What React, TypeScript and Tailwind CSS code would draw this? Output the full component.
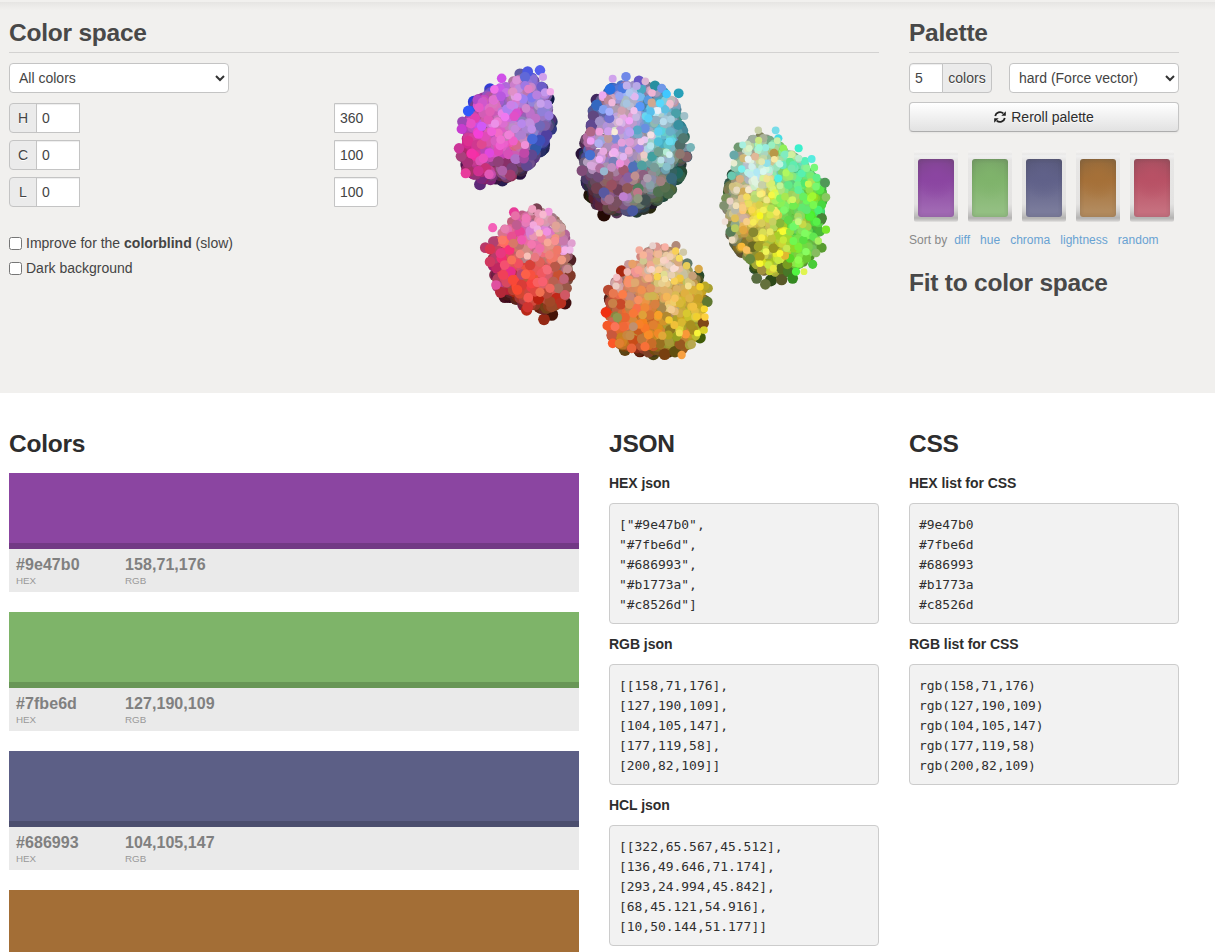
import React from "react";

type Swatch = { hex: string; rgb: string; shown: string; edge: string; deep: string; mid: string; light: string };

const SWATCHES: Swatch[] = [
  { hex: "#9e47b0", rgb: "158,71,176", shown: "#8b45a1", edge: "#723985", deep: "#7b4589", mid: "#8b45a1", light: "#a068b3" },
  { hex: "#7fbe6d", rgb: "127,190,109", shown: "#7eb469", edge: "#689656", deep: "#759e66", mid: "#7fb36b", light: "#93bf82" },
  { hex: "#686993", rgb: "104,105,147", shown: "#5c5f86", edge: "#4b4e6e", deep: "#575878", mid: "#606189", light: "#7a7b9b" },
  { hex: "#b1773a", rgb: "177,119,58", shown: "#a36e36", edge: "#875a2b", deep: "#8c673d", mid: "#a57038", light: "#b28a5d" },
  { hex: "#c8526d", rgb: "200,82,109", shown: "#b55062", edge: "#954151", deep: "#9c4f5e", mid: "#b85165", light: "#c66f7e" },
];

const JSON_BLOCKS = [
  { title: "HEX json", body: `["#9e47b0",\n"#7fbe6d",\n"#686993",\n"#b1773a",\n"#c8526d"]` },
  { title: "RGB json", body: `[[158,71,176],\n[127,190,109],\n[104,105,147],\n[177,119,58],\n[200,82,109]]` },
  { title: "HCL json", body: `[[322,65.567,45.512],\n[136,49.646,71.174],\n[293,24.994,45.842],\n[68,45.121,54.916],\n[10,50.144,51.177]]` },
];

const CSS_BLOCKS = [
  { title: "HEX list for CSS", body: "#9e47b0\n#7fbe6d\n#686993\n#b1773a\n#c8526d" },
  { title: "RGB list for CSS", body: "rgb(158,71,176)\nrgb(127,190,109)\nrgb(104,105,147)\nrgb(177,119,58)\nrgb(200,82,109)" },
];

/* Each cluster: an origin, a hull, and anchor samples "x y rrggbb" in thirds of a pixel. */
type Cluster = { ox: number; oy: number; n: number; hull: string; samples: string };

const CLUSTERS: Cluster[] = [
  {
    ox: 445, oy: 55, n: 750,
    hull: "225 55 262 60 285 85 305 110 312 150 318 200 304 250 285 300 250 330 210 360 160 375 110 372 65 345 60 300 65 240 68 180 95 130 135 108 190 90",
    samples:
      "310 132 202a60,320 200 303470,318 222 303880,295 280 28245a,225 355 2c1240,172 375 281c50,65 330 50144c,150 368 481038,285 46 555fee,248 50 4c58e0,240 66 6068d8,135 102 343cd4,86 140 2c3cd8,70 168 3058fa,98 135 b048c8,52 200 9c48b4,50 222 c83cd0,42 280 cc3498,48 304 a8407c,105 388 5c2878,62 355 e83c9c,290 95 6c5cc8,240 92 a078e4,300 112 c498ec,294 66 d0a0ec,170 70 d050e8,214 76 dc94d8,148 103 f070e8,250 102 e080c8,316 110 f4acec,205 110 e090c8,218 126 e898ec,144 134 e070d0,168 124 b858e0,112 142 d058cc,102 158 e858c8,135 170 e060b8,185 162 b080f0,197 150 cc80e8,235 132 a080f0,260 128 8078ec,243 160 d088d0,275 120 b880e0,287 146 c8a0ec,308 148 b490e8,312 182 9c80e0,290 170 9080d8,180 186 f078f0,150 206 ec90e8,110 214 d058f8,78 206 e850c8,90 190 e040b0,130 194 e058b8,208 184 e050c8,215 175 d850d0,230 206 b888ec,255 204 c090e0,272 190 c070c8,300 212 8060a8,285 212 7068b8,210 222 c888dc,190 240 f080d8,167 254 f070d0,140 230 f060d8,100 237 f440d8,120 245 e04cb8,70 258 dc3090,95 270 d03890,110 268 e04890,165 272 f060d0,205 258 f060c8,215 270 d86890,240 270 f090d8,230 240 b080d0,260 222 c090e8,262 252 4868d8,284 256 3c50b8,272 280 3058a8,305 240 5040a0,80 296 f430a8,115 310 ec50c0,133 294 e048e0,160 288 e048b8,190 298 d850b8,210 312 b070c8,238 294 c048a8,236 310 a048a0,260 300 604890,245 332 604890,185 325 883068,160 320 904078,68 322 a83078,100 348 d03090,122 340 c83078,132 358 e058b8,172 347 b060a8,200 340 784078,196 360 a03c70,155 335 8c2058",
  },
  {
    ox: 570, oy: 60, n: 1000,
    hull: "115 85 168 72 230 78 285 95 315 120 328 170 342 220 352 260 345 310 330 350 305 390 265 420 220 450 160 455 100 448 65 410 48 360 42 310 45 250 60 190 75 130",
    samples:
      "80 120 402860,36 282 281438,60 405 201008,102 464 240a04,200 455 243c34,240 442 282810,280 408 28483c,315 345 285850,318 320 284840,52 370 382850,45 250 503858,350 290 385870,295 400 486848,340 235 507870,80 432 503048,140 458 583858,188 452 4858a0,85 418 602838,225 420 405050,265 395 507050,285 382 587050,70 168 604880,65 195 604890,36 332 804c78,62 215 b06888,80 135 3468c0,120 88 2870e0,168 50 7088e8,207 62 6858c8,128 56 d0a4ec,226 64 dcb4d4,255 77 2890a0,326 100 28a0b8,275 85 7098e8,158 85 4878e0,170 77 c0b0ec,200 78 b8a8e8,214 88 48a8c0,246 99 f0b4d4,290 102 40c8ff,98 105 ecaaf0,148 108 98a4f0,126 128 f0b8dc,115 120 c08898,270 130 58d8fc,235 120 5898e0,208 110 78b8f0,178 98 b0c8f0,195 110 e0b8f0,245 128 d0a890,300 130 f0c0d0,100 148 80a0f0,118 155 a8b0fc,88 184 a090c8,155 152 d0a0b0,170 130 a8c4e0,210 140 5898f8,242 155 58c0ec,264 152 e8f0f8,285 148 60c0e0,318 160 48a0a8,343 168 a0c0c8,303 178 a8d0e0,148 185 e8c0e8,178 182 f4a4f8,192 152 f0c0ec,118 175 7070d0,235 175 58d0f8,258 180 90b0c0,280 185 b8dcec,325 195 3890a0,88 215 f0a0dc,115 214 d0a0ec,134 216 f8ecd8,62 243 f0a0f4,150 211 c090d8,180 218 c0a0f0,202 210 58a8c8,225 205 6890e0,243 225 f4e0e4,265 215 60d0f0,300 215 68b0c8,213 245 f0c8ec,180 246 dc9cd8,155 248 e4a0dc,115 236 c09898,135 235 8088d8,85 250 b0b0f0,100 274 e8a8e0,60 285 4870d0,88 298 f0b0f8,62 316 d8a8dc,133 275 f0b0f0,160 265 9090d8,176 272 e8a8d8,208 265 a088e0,222 285 ecccc8,242 257 b8e4ec,298 244 68dcf0,265 245 50c0d8,265 275 70a090,298 284 d0f0f0,273 300 b8e0e8,362 262 78b4b8,330 282 907870,330 255 506c68,350 290 886468,246 290 40a0a0,290 320 88c0cc,253 322 789c98,215 316 50a0a0,190 320 5070b8,160 290 e0b4f0,150 310 f090dc,125 322 c090c0,102 334 98b8d0,90 325 b070a0,85 350 704c78,115 345 906070,130 305 7880b8,175 352 8860a0,195 348 c09090,220 345 8c6080,232 355 b0a0b0,240 375 88a0a8,272 364 a08080,305 355 386878,205 385 508060,172 385 905858,203 397 bc7888,160 410 c080d0,118 418 a07090,102 398 5858a0,80 385 704050,145 390 704058,204 416 909880,160 330 a05870,140 425 785060,125 375 985060",
  },
  {
    ox: 710, oy: 115, n: 1300,
    hull: "120 75 150 62 195 80 220 100 255 115 285 150 305 180 335 205 342 240 335 285 332 325 318 360 320 400 295 430 265 455 230 475 185 475 140 460 110 425 80 400 62 360 60 310 48 270 55 210 75 160 85 115",
    samples:
      "68 180 284c3c,60 205 305444,65 238 285038,345 203 509858,335 310 488438,95 405 385030,82 385 404828,140 490 586c40,183 496 2c4818,166 508 64703c,215 494 585828,248 490 348820,135 460 305030,235 470 487828,120 432 68883c,335 398 589c30,62 350 587c58,42 272 809070,48 250 789058,85 97 709870,72 120 68a8a8,130 72 a0b0a0,145 46 c8d0a8,197 46 78dce8,205 70 48dce4,160 70 a8b098,146 76 c8e880,202 77 c8f0a8,185 90 98f0c0,98 90 a8f0e0,118 100 d8f4c8,167 98 98ece0,148 98 a0f8d8,192 115 b89848,220 100 90f058,266 100 3cf0cc,193 133 f8e8a0,225 118 80ecc0,245 118 d0f0a0,240 140 60e890,285 138 58f0b8,305 132 58ece0,313 158 78f878,266 130 b0ecc8,100 130 d0b878,114 132 e8f4f0,72 145 e8ecd0,74 157 90c8b0,135 125 e0b898,155 140 e0e8b0,170 145 90e0e8,210 148 c0f4e0,218 150 68e8c0,250 150 60ecb0,290 160 88f490,95 162 78f0ec,125 155 d0f0ec,140 172 b0e8f4,120 178 c0ecf0,160 170 d8f8f0,65 182 68c8b0,90 192 d8b080,228 174 b0f860,205 190 50f0e0,245 160 78e8b0,275 175 58f0b0,135 202 e0f4e0,170 192 f0e490,185 205 d8f070,155 210 c8d0a8,68 215 d0c080,80 225 e8dcc0,115 225 f4e8c8,100 230 d0ac58,210 212 c0f498,235 210 60e888,285 205 50e870,320 188 60f088,318 215 78f870,348 247 88c860,295 207 c8f850,330 225 58e848,60 258 e8d0c4,95 250 e0c488,110 245 f4dc60,135 250 b8d870,150 238 f8f080,185 240 f4f848,170 255 f0e888,210 250 80f060,248 254 d0f860,225 245 a8e850,280 245 68f060,308 243 a0f830,265 225 60f098,45 320 f0e0d8,75 285 b8b8a8,78 272 f0e0b8,98 278 f8cc80,125 285 f8d850,148 270 d8d048,150 302 f8f820,183 280 b0e050,200 292 f8e860,180 300 d8e848,160 285 f0f058,222 285 80f868,250 272 70ec50,310 270 78f850,335 270 48d840,325 285 48f070,290 285 60e870,75 310 e0c058,100 310 d0b0a0,110 320 f8d088,130 322 f8ec58,75 328 90a888,155 325 d8cc58,188 320 c8d060,210 325 88b838,235 315 60d848,265 320 c8f880,278 328 c8d848,300 305 50f038,250 335 70f868,320 320 58f048,348 344 78e82c,330 350 48b838,66 375 ecdcc0,75 340 b8cc60,100 345 e0a840,130 352 888830,155 368 f8f048,185 370 c0c438,180 350 e8e860,218 350 f8fc30,205 362 a8d028,220 375 c8e838,240 350 90e440,285 355 80fc60,310 365 60e850,325 378 a8f060,250 378 70f850,280 375 58e040,95 395 f8b838,110 405 f8c060,128 395 686824,145 395 a0a028,168 410 f0f458,190 400 989420,210 415 f8f830,230 400 c8e850,250 400 90d828,288 410 88fc60,265 395 78f038,318 414 88bc60,150 446 f8f830,150 425 a89820,175 450 c8e840,205 436 c8e840,225 422 e0b830,240 430 58d828,265 435 90fc50,308 448 48cc38,282 470 e0f450,258 470 50f440,232 448 789c20,215 460 586c20,155 465 a09040,190 460 e8e840,290 430 68c830",
  },
  {
    ox: 470, oy: 195, n: 600,
    hull: "150 60 190 45 235 55 268 85 285 115 298 155 292 200 296 245 285 300 262 330 225 345 180 335 145 318 110 300 82 275 75 235 65 190 75 140 95 105 125 80",
    samples:
      "200 42 784050,300 195 502024,285 324 401010,105 305 481020,128 300 501018,245 358 441408,300 242 803828,75 240 802848,70 140 b04070,160 330 802040,210 335 602818,170 345 b82818,222 373 942814,245 335 984828,272 324 b83020,92 292 b42838,46 158 b83868,60 162 d83450,60 200 d03860,68 98 f460b8,78 270 e050a0,132 52 e83c98,136 62 e870a8,105 102 e880b0,140 90 c05c90,187 42 f0a0c0,168 70 f078b8,205 55 e898b8,219 58 f8b8d0,236 50 f098dc,210 80 f898b8,245 75 d890a8,190 90 f4a8dc,180 107 d880d0,202 102 f0b0e4,208 114 f8c0b8,231 110 f090e0,258 92 e0a498,275 98 d0a0a0,150 110 e84498,125 125 e85090,97 135 fc7868,130 145 d87868,148 150 c07070,155 135 f058b0,185 148 f478b0,210 160 f070a8,215 130 f08098,233 142 f8a898,255 138 f89090,280 138 c878ac,305 145 e0a0d0,285 165 f8b0e8,262 165 f07868,300 165 f0b8e8,92 175 e83880,75 190 b83c68,95 190 f02c70,118 165 f83078,150 177 f08880,172 183 f8c0b8,195 187 e87880,125 195 f87058,210 202 e06058,238 180 f08078,250 188 f07868,275 195 f09880,293 222 c88c90,104 210 f45070,122 230 e82c88,80 215 c02860,145 205 f05060,155 238 b84870,167 238 fc6048,182 240 f85040,180 210 d84038,215 235 f05860,232 225 f46c78,255 215 b85848,265 240 c85030,282 252 c06478,100 240 f04058,110 262 d84860,128 255 f84838,142 285 f84830,155 270 d83c38,185 265 f84440,218 260 f86070,202 262 f86060,240 280 f06860,265 280 a87060,290 280 985848,285 300 d05864,175 308 f85850,210 292 f07050,230 295 b84838,195 290 e04840,250 260 b86050,173 336 d03430,240 320 a04828,205 310 b82010,260 310 c02818",
  },
  {
    ox: 590, oy: 235, n: 800,
    hull: "155 60 195 40 245 42 275 65 292 95 315 115 335 150 345 200 335 245 325 290 305 330 260 350 210 355 150 348 95 340 65 310 62 270 55 225 60 185 72 145 100 110 135 85",
    samples:
      "325 122 284828,292 85 607868,60 190 602018,105 345 604010,150 348 601808,190 358 504410,224 358 784010,255 350 605010,330 308 405c08,352 200 607830,340 265 804818,250 320 405008,95 108 a82810,55 165 b84830,62 205 b84c38,48 232 f03010,52 272 f45828,65 300 c8583c,68 325 fc5828,90 325 d87828,125 340 e86438,165 335 f87038,275 360 f8a040,298 330 a8a038,305 328 b8a850,270 328 985820,237 320 a89838,148 45 f4ac9c,188 32 e8d0cc,200 35 dc9890,225 36 f8b0a4,258 32 b08878,257 48 f8d058,280 52 d0c8a8,160 60 f8b498,175 65 e0a0a0,205 58 f0b898,240 65 f0d0b0,268 70 f8dc60,220 76 f8d4c4,200 78 e0c080,115 88 c89898,127 87 e8a068,160 78 d0c890,182 90 f0a890,185 103 f8d4cc,290 92 e8cc58,265 82 d8a880,250 102 f8dcd4,326 102 d8a848,308 122 c8a078,282 120 c8c0a0,80 127 f4c0c4,112 110 f0b8b0,78 153 ecccc4,85 135 d89090,145 105 f8a090,115 145 f8906c,135 143 e0a870,175 130 f8b088,202 125 f8d450,225 132 f4e0a0,215 145 e8d090,245 120 e8d0b0,253 138 f8d058,270 130 f0c840,295 153 f4e090,330 155 f4d028,345 153 b8a828,355 160 a8a030,310 165 d8b038,70 175 e87850,98 178 fc7c48,120 185 c88878,155 165 f09050,182 160 e09060,188 183 d0b450,145 195 f89060,222 165 e0b068,230 185 f4b858,255 190 f8c460,285 175 e0b040,298 190 e0b448,325 190 c8a028,343 222 f8d830,345 246 fcd040,68 205 c88048,92 208 c84828,118 208 d89050,140 220 f87048,165 218 f08838,195 208 d88040,215 220 a8884c,244 224 f4cc90,270 205 d8b838,290 235 d8c830,310 215 f0c040,315 245 e0cc48,82 248 909850,75 275 fc7458,105 248 e86430,130 235 f87838,158 240 e0a038,180 240 d87430,205 240 f8a028,230 245 b08830,253 270 f0c038,237 255 f4c830,275 262 d8b830,320 245 f0d030,100 275 f06838,130 275 c09070,145 285 c85c20,120 302 c88c48,88 325 e08030,148 268 f88028,165 280 f87828,190 270 e08030,205 295 f08828,217 302 e0a838,240 285 907820,268 294 f0e050,287 298 f89838,322 294 f8f438,342 285 d8d028,310 285 a88c20,302 270 a89020,175 300 f88c28,155 312 c07838,130 315 c84c18,185 325 c86c28,210 325 987020,235 300 b0a020,260 305 98a020",
  },
];

type Dot = { x: number; y: number; r: number; fill: string; light: number };

function makeRandom(seed: number) {
  let s = seed;
  return () => {
    s = (s * 1664525 + 1013904223) % 4294967296;
    return s / 4294967296;
  };
}

function inside(x: number, y: number, hull: number[][]) {
  let hit = false;
  for (let i = 0, j = hull.length - 1; i < hull.length; j = i++) {
    const [xi, yi] = hull[i];
    const [xj, yj] = hull[j];
    if (yi > y !== yj > y && x < ((xj - xi) * (y - yi)) / (yj - yi) + xi) hit = !hit;
  }
  return hit;
}

function buildDots(c: Cluster, index: number): Dot[] {
  const rnd = makeRandom(97 + index * 1013);
  const nums = c.hull.split(" ").map(Number);
  const hull: number[][] = [];
  for (let i = 0; i < nums.length; i += 2) hull.push([nums[i], nums[i + 1]]);
  const anchors = c.samples.split(",").map((s) => {
    const [x, y, h] = s.trim().split(" ");
    return { x: +x, y: +y, rgb: [0, 2, 4].map((k) => parseInt(h.slice(k, k + 2), 16)) };
  });
  const lum = (v: number[]) => 0.3 * v[0] + 0.59 * v[1] + 0.11 * v[2];
  const make = (x: number, y: number, rgb: number[]): Dot => {
    const l = lum(rgb);
    return {
      x: c.ox + x / 3,
      y: c.oy + y / 3,
      r: Math.max(3.3, 7 - l * 0.0163),
      fill: `rgb(${rgb.map((v) => Math.round(v)).join(",")})`,
      light: l,
    };
  };
  const fillers: Dot[] = [];
  const xs = hull.map((p) => p[0]);
  const ys = hull.map((p) => p[1]);
  const x0 = Math.min(...xs), x1 = Math.max(...xs), y0 = Math.min(...ys), y1 = Math.max(...ys);
  while (fillers.length < c.n) {
    const x = x0 + rnd() * (x1 - x0);
    const y = y0 + rnd() * (y1 - y0);
    if (!inside(x, y, hull)) continue;
    let w = 0;
    const acc = [0, 0, 0];
    for (const a of anchors) {
      const d = (a.x - x) ** 2 + (a.y - y) ** 2 + 30;
      const k = 1 / (d * d);
      w += k;
      for (let i = 0; i < 3; i++) acc[i] += a.rgb[i] * k;
    }
    const gain = 0.66 + rnd() * 0.34;
    const rgb = acc.map((v) => Math.max(0, Math.min(255, (v / w) * gain + (rnd() - 0.5) * 30)));
    fillers.push(make(x, y, rgb));
  }
  const byLight = (a: Dot, b: Dot) => a.light - b.light;
  fillers.sort(byLight);
  const tops = anchors.map((a) => make(a.x, a.y, a.rgb)).sort(byLight);
  const dark = tops.filter((d) => d.light < 75);
  const bright = tops.filter((d) => d.light >= 75);
  return [...dark, ...fillers, ...bright];
}

const DOTS = CLUSTERS.flatMap(buildDots);

function ColorMap() {
  return (
    <svg className="mt-[-1px] h-[320px] w-[450px]" viewBox="429 62 450 320" role="img">
      {DOTS.map((d, i) => (
        <circle key={i} cx={d.x} cy={d.y} r={d.r} fill={d.fill} />
      ))}
    </svg>
  );
}

function Heading({ children, ruled = false }: { children: React.ReactNode; ruled?: boolean }) {
  return (
    <h3 className={ruled ? "h-10 border-b border-[#d3d2d1] text-[24.5px] leading-[40px] font-bold tracking-[-0.23px] text-[#484848]" : "h-10 text-[24.5px] leading-[40px] font-bold tracking-[-0.23px]"}>
      {children}
    </h3>
  );
}

function Picker({ label, className }: { label: string; className: string }) {
  return (
    <button className={`flex h-[30px] items-center justify-between rounded border border-[#c4c4c4] bg-white pr-[3px] pl-[9px] text-sm ${className}`}>
      <span>{label}</span>
      <svg className="h-[10px] w-[10px]" viewBox="0 0 10 10" fill="none" stroke="#333" strokeWidth="2">
        <path d="M1 3l4 4 4-4" />
      </svg>
    </button>
  );
}

function RangeRow({ label, max }: { label: string; max: string }) {
  return (
    <div className="flex h-[30px] w-[369px] justify-between">
      <div className="flex">
        <span className="flex w-7 items-center justify-center rounded-l border border-[#c4c4c4] bg-[#ebebeb] text-sm [text-shadow:0_1px_0_#fff]">{label}</span>
        <input className="-ml-px w-11 border border-[#c4c4c4] bg-white px-[5px] text-sm shadow-[inset_0_1px_1px_rgba(0,0,0,0.075)]" defaultValue="0" />
      </div>
      <input className="w-11 rounded-r-[3px] border border-[#c4c4c4] bg-white px-[5px] text-sm shadow-[inset_0_1px_1px_rgba(0,0,0,0.075)]" defaultValue={max} />
    </div>
  );
}

function Check({ children }: { children: React.ReactNode }) {
  return (
    <label className="flex h-[25px] items-center text-sm">
      <input type="checkbox" className="mr-1 h-[13px] w-[13px]" />
      <span className="pb-px">{children}</span>
    </label>
  );
}

function RefreshIcon() {
  return (
    <svg className="mr-[5px] h-3 w-3" viewBox="0 0 12 12">
      <path d="M1.2 5A4.9 4.9 0 0 1 9.3 2.4" fill="none" stroke="#222" strokeWidth="1.8" />
      <path d="M11.8.3v4.5H7.3z" fill="#222" />
      <path d="M10.8 7a4.9 4.9 0 0 1-8.1 2.6" fill="none" stroke="#222" strokeWidth="1.8" />
      <path d="M.2 11.7V7.2h4.5z" fill="#222" />
    </svg>
  );
}

function Card({ swatch }: { swatch: Swatch }) {
  return (
    <div className="h-[72px] w-11 rounded-[2px] bg-[linear-gradient(to_bottom,#f2f1f0_0px,#f3f2f1_2px,#e9e8e7_4px,#f0f0f0_6px,#e7e6e5_10px,#e4e3e2_54px,#d2d1d0_61px,#b4b3b2_68px,#d2d1d0_71px,#ebeae8_72px)] px-1 pt-[9px]">
      <div
        className="h-[58px] rounded-[3px] shadow-[inset_0_0_4px_rgba(60,60,60,0.22)]"
        style={{ background: `radial-gradient(ellipse 20px 24px at 50% 30%, ${swatch.mid}, transparent), linear-gradient(to bottom, ${swatch.deep}, ${swatch.mid} 36%, ${swatch.light} 88%)` }}
      />
    </div>
  );
}

function Code({ title, body }: { title: string; body: string }) {
  return (
    <div className="mb-[10px]">
      <h4 className="text-sm leading-5 font-bold tracking-[-0.05px]">{title}</h4>
      <pre className="mt-[10px] h-[121px] rounded border border-[#cccccc] bg-[#f2f2f2] pt-[10.6px] pl-[9px] font-['DejaVu_Sans_Mono',monospace] text-[12.95px] leading-5 text-[#2f2f2f]">
        {body}
      </pre>
    </div>
  );
}

function ColorBar({ swatch, labelled }: { swatch: Swatch; labelled: boolean }) {
  return (
    <div className="h-[119px] bg-[#eaeaea]">
      <div className="h-[76px] border-b-[6px]" style={{ backgroundColor: swatch.shown, borderColor: swatch.edge }} />
      {labelled && (
        <div className="flex pt-[6px] pl-[7px] text-[#808080]">
          <div className="w-[109px]">
            <div className="text-base leading-5 font-bold tracking-[0.07px]">{swatch.hex}</div>
            <div className="text-[9.8px] leading-3 text-[#999]">HEX</div>
          </div>
          <div>
            <div className="text-base leading-5 font-bold tracking-[0.07px]">{swatch.rgb}</div>
            <div className="text-[9.8px] leading-3 text-[#999]">RGB</div>
          </div>
        </div>
      )}
    </div>
  );
}

export default function App() {
  return (
    <div className="h-[952px] w-[1215px] overflow-hidden bg-white font-['Liberation_Sans',sans-serif] text-[#2d2d2d]">
      <header className="h-[393px] bg-[#f1f0ee] text-[#444]">
        <div className="h-[13px] bg-[linear-gradient(to_bottom,#f1f0ee_2px,#e6e5e3_2px,#e9e8e6_4px,#f1f0ee_10px)]" />
        <div className="flex gap-[30px] pl-[9px]">
          <section className="w-[870px]">
            <Heading ruled>Color space</Heading>
            <div className="mt-[10px] flex">
              <div className="w-[420px]">
                <Picker label="All colors" className="w-[220px]" />
                <div className="mt-[10px] flex flex-col gap-[7px]">
                  <RangeRow label="H" max="360" />
                  <RangeRow label="C" max="100" />
                  <RangeRow label="L" max="100" />
                </div>
                <div className="mt-6">
                  <Check>Improve for the <b>colorblind</b> (slow)</Check>
                  <Check>Dark background</Check>
                </div>
              </div>
              <ColorMap />
            </div>
          </section>
          <section className="w-[270px]">
            <Heading ruled>Palette</Heading>
            <div className="mt-[10px] flex h-[30px] justify-between">
              <div className="flex">
                <input className="w-[34px] rounded-l border border-[#c4c4c4] bg-white px-[5px] text-sm shadow-[inset_0_1px_1px_rgba(0,0,0,0.075)]" defaultValue="5" />
                <span className="-ml-px flex w-[50px] items-center justify-center rounded-r border border-[#c4c4c4] bg-[#ebebeb] text-sm [text-shadow:0_1px_0_#fff]">colors</span>
              </div>
              <Picker label="hard (Force vector)" className="w-[170px]" />
            </div>
            <button className="mt-[9px] flex h-[30px] w-full items-center justify-center rounded border border-[#c5c5c5] border-b-[#adadad] bg-linear-to-b from-white to-[#e2e2e2] text-sm text-[#2d2d2d] shadow-[0_1px_2px_rgba(0,0,0,0.05)] [text-shadow:0_1px_1px_rgba(255,255,255,0.75)]">
              <RefreshIcon />
              Reroll palette
            </button>
            <div className="mt-[18px] flex gap-[10px] pl-[5px]">
              {SWATCHES.map((s) => (
                <Card key={s.hex} swatch={s} />
              ))}
            </div>
            <div className="mt-2 flex h-5 items-center text-xs tracking-[0.02px] text-[#68a2d2]">
              <span className="mr-[7px] text-[#888]">Sort by</span>
              <div className="flex gap-[10px]">
                <a>diff</a>
                <a>hue</a>
                <a>chroma</a>
                <a>lightness</a>
                <a>random</a>
              </div>
            </div>
            <div className="mt-[13px] text-[#484848]">
              <Heading>Fit to color space</Heading>
            </div>
          </section>
        </div>
      </header>
      <main className="flex gap-[30px] pt-[31px] pl-[9px]">
        <section className="w-[570px]">
          <Heading>Colors</Heading>
          <div className="mt-[9px] flex flex-col gap-5">
            {SWATCHES.slice(0, 4).map((s, i) => (
              <ColorBar key={s.hex} swatch={s} labelled={i < 3} />
            ))}
          </div>
        </section>
        <section className="w-[270px]">
          <Heading>JSON</Heading>
          <div className="mt-[9px]">
            {JSON_BLOCKS.map((b) => (
              <Code key={b.title} {...b} />
            ))}
          </div>
        </section>
        <section className="w-[270px]">
          <Heading>CSS</Heading>
          <div className="mt-[9px]">
            {CSS_BLOCKS.map((b) => (
              <Code key={b.title} {...b} />
            ))}
          </div>
        </section>
      </main>
    </div>
  );
}
